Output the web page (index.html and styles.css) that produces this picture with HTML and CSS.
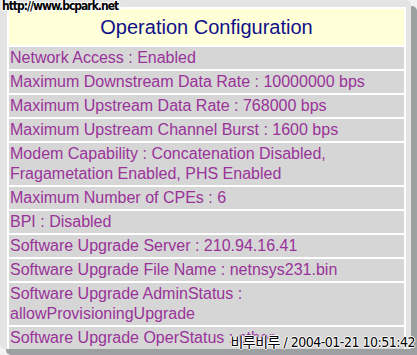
FILE: index.html
```html
<!DOCTYPE html>
<html lang="ko">
<head>
  <meta charset="UTF-8" />
  <title>Operation Configuration</title>
  <link rel="stylesheet" href="styles.css">
</head>
<body>
  <div class="frame">
    <div class="panel">
      <table class="config">
        <tr><th>Operation Configuration</th></tr>
        <tr><td>Network Access : Enabled</td></tr>
        <tr><td>Maximum Downstream Data Rate : 10000000 bps</td></tr>
        <tr><td>Maximum Upstream Data Rate : 768000 bps</td></tr>
        <tr><td>Maximum Upstream Channel Burst : 1600 bps</td></tr>
        <tr><td>Modem Capability : Concatenation Disabled,<br>Fragametation Enabled, PHS Enabled</td></tr>
        <tr><td>Maximum Number of CPEs : 6</td></tr>
        <tr><td>BPI : Disabled</td></tr>
        <tr><td>Software Upgrade Server : 210.94.16.41</td></tr>
        <tr><td>Software Upgrade File Name : netnsys231.bin</td></tr>
        <tr><td>Software Upgrade AdminStatus :<br>allowProvisioningUpgrade</td></tr>
        <tr><td>Software Upgrade OperStatus : other</td></tr>
      </table>
    </div>
    <!-- watermarks over the capture -->
    <div class="mark-url">http://www.bcpark.net</div>
    <div class="mark-stamp">비루비루 / 2004-01-21 10:51:42</div>
  </div>
</body>
</html>
```
FILE: styles.css
```css
body {
  margin: 0;
  background: #f2f2f2;
  overflow: hidden;
}
.frame {
  position: relative;
  width: 417px;
  height: 355px;
  overflow: hidden;
}
.panel {
  width: 411px;
  height: 349px;
  background: #e4e4e4;
  border-radius: 0 5px 0 5px;
  box-shadow: 6px 6px 0 #9ca0a1;
  padding: 7px 0 0 7px;
  box-sizing: border-box;
  overflow: hidden;
}
.config {
  width: 399px;
  background: #ffffff;
  border-spacing: 2px;
  font-family: "Liberation Sans", Arial, sans-serif;
  font-size: 16px;
  line-height: 20px;
}
.config th {
  height: 36px;
  background: #ffffd8;
  color: #10108a;
  font-size: 20px;
  font-weight: normal;
  text-align: center;
  padding: 0;
}
.config td {
  background: #d6d6d6;
  color: #993399;
  padding: 1px 1px;
  text-align: left;
  white-space: nowrap;
}
.mark-url {
  position: absolute;
  top: 0;
  left: 2px;
  font-family: "DejaVu Sans Condensed", "DejaVu Sans", sans-serif;
  font-weight: bold;
  font-size: 12px;
  line-height: 13px;
  letter-spacing: -1px;
  color: #000;
  text-shadow: 1px 0 0 #fff, -1px 0 0 #fff, 0 1px 0 #fff, 0 -1px 0 #fff,
    1px 1px 0 #fff, -1px -1px 0 #fff, 1px -1px 0 #fff, -1px 1px 0 #fff;
}
.mark-stamp {
  position: absolute;
  right: 2px;
  bottom: 5px;
  font-family: "DejaVu Sans Condensed", "Noto Sans CJK KR", sans-serif;
  font-size: 14px;
  line-height: 16px;
  letter-spacing: -0.5px;
  color: #000;
  text-shadow: 1px 0 0 #fff, -1px 0 0 #fff, 0 1px 0 #fff, 0 -1px 0 #fff;
}
```
